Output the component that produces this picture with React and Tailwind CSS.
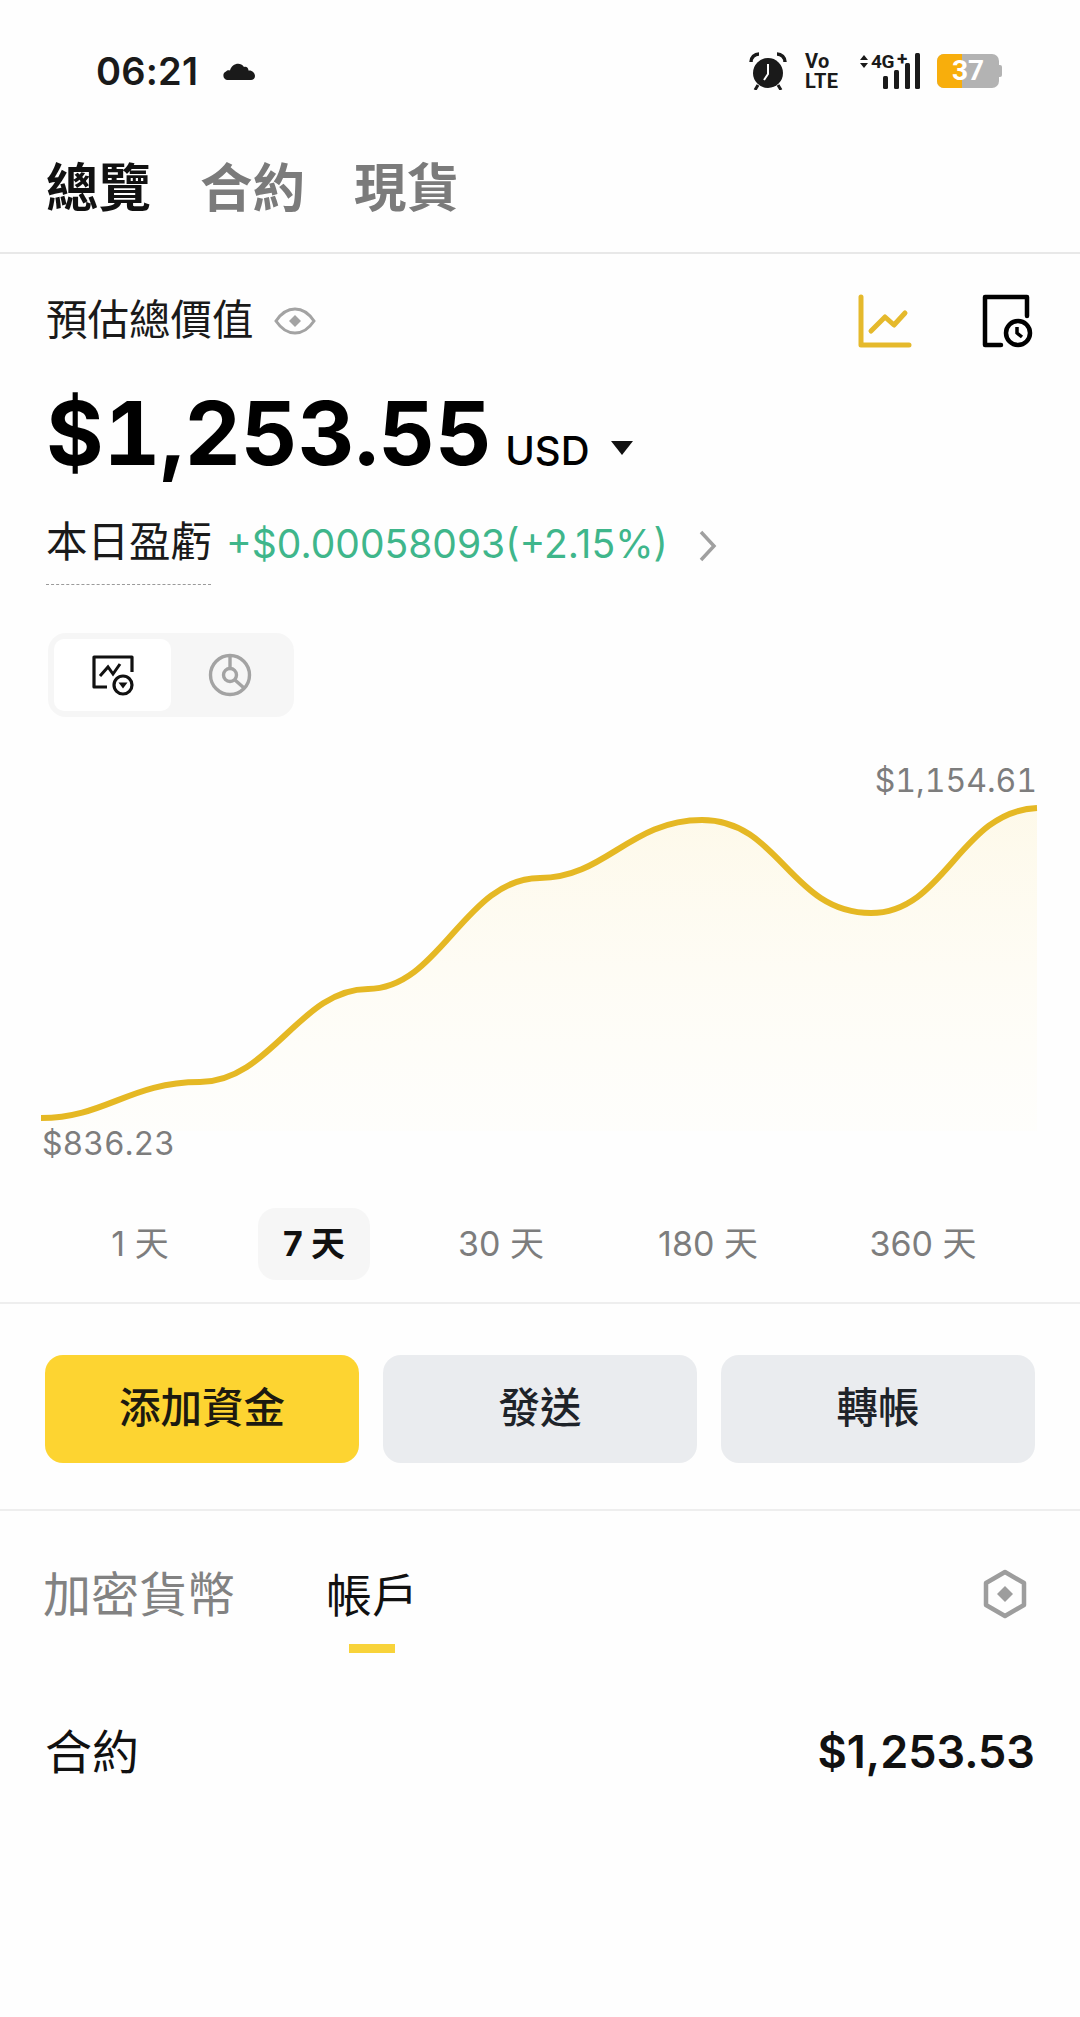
const lineD = "M41 317 C105 317 130 281 200 281 C270 281 300 188 368 188 C440 188 465 77 540 77 C605 77 630 19 702 19 C780 19 790 112 871 112 C945 112 960 10 1037 7";
const cjk = "font-['Inter','Noto_Sans_CJK_TC',sans-serif]";

function Chart() {
  return (
    <svg width="1080" height="330" viewBox="0 0 1080 330" className="block">
      <defs>
        <linearGradient id="fill" x1="0" y1="0" x2="0" y2="1">
          <stop offset="0" stopColor="#fdf6dc" stopOpacity="0.6" />
          <stop offset="1" stopColor="#fffdf5" stopOpacity="0.3" />
        </linearGradient>
      </defs>
      <path d={`${lineD} L1037 330 L41 330 Z`} fill="url(#fill)" />
      <path d={lineD} fill="none" stroke="#e5b824" strokeWidth="6" />
    </svg>
  );
}

function Status() {
  return (
    <div className="flex items-center h-[70px] mt-[36px] pl-[96px]">
      <span className="text-[38px] leading-none font-semibold text-[#1a1a1a] tracking-[0.2px] w-[126px]">06:21</span>
      <svg width="34" height="20" viewBox="0 0 34 20">
        <path d="M5 19 A4.5 4.5 0 0 1 4 10.5 C5 9 7 9 8 9.5 C9.5 3 18 0 22 6 C24 5 26.5 6.5 26.5 9.5 C30 9 33 12 33 15 C33 17.5 31 19 29 19 Z" fill="#1a1a1a" />
      </svg>
      <div className="flex-1" />
      <svg width="38" height="38" viewBox="0 0 38 38" className="mr-[18px]">
        <circle cx="19" cy="21" r="15" fill="#1a1a1a" />
        <path d="M2 10 A8 8 0 0 1 10 2" fill="none" stroke="#1a1a1a" strokeWidth="3.5" />
        <path d="M28 2 A8 8 0 0 1 36 10" fill="none" stroke="#1a1a1a" strokeWidth="3.5" />
        <path d="M9 33 L6 38 M29 33 L32 38" stroke="#1a1a1a" strokeWidth="3" />
        <path d="M19 12 L19 22 L15 28" fill="none" stroke="#fff" strokeWidth="2" />
      </svg>
      <div className="flex flex-col w-[34px] font-['Roboto',sans-serif] font-bold text-[#1a1a1a] text-[20px] leading-[20px] tracking-[0.4px] mr-[20px]">
        <span>Vo</span>
        <span>LTE</span>
      </div>
      <div className="relative w-[62px] h-[38px] mr-[16px]">
        <svg width="62" height="38" viewBox="0 0 62 38" className="absolute left-0 top-0">
          <path d="M1 8 L5 3 L9 8 Z M1 11 L9 11 L5 16 Z" fill="#1a1a1a" />
          <rect x="24" y="24" width="5" height="13" rx="1.5" fill="#1a1a1a" />
          <rect x="35" y="18" width="5" height="19" rx="1.5" fill="#1a1a1a" />
          <rect x="46" y="11" width="5" height="26" rx="1.5" fill="#1a1a1a" />
          <rect x="56" y="1" width="5" height="36" rx="1.5" fill="#1a1a1a" />
        </svg>
        <span className="absolute left-[12px] top-[0px] text-[19px] leading-[19px] font-['Roboto',sans-serif] font-bold text-[#1a1a1a] tracking-[-0.5px]">4G</span>
        <span className="absolute left-[38px] top-[-3px] text-[19px] leading-[19px] font-['Roboto',sans-serif] font-bold text-[#1a1a1a]">+</span>
      </div>
      <div className="relative w-[66px] h-[34px] mr-[77px] flex items-center">
        <div className="relative w-[62px] h-[34px] rounded-[7px] overflow-hidden bg-[#b3b3b3] flex items-center justify-center">
          <div className="absolute left-0 top-0 bottom-0 w-[25px] bg-[#f8ae0c]" />
          <span className="relative text-[28px] leading-none font-bold text-white font-['Roboto',sans-serif]">37</span>
        </div>
        <div className="w-[3px] h-[12px] bg-[#b3b3b3] rounded-r-[2px]" />
      </div>
    </div>
  );
}

function PageTabs() {
  return (
    <div className={`flex items-center h-[60px] mt-[52px] pl-[46px] text-[52.5px] leading-none font-bold ${cjk}`}>
      <span className="text-[#111] w-[154px]">總覽</span>
      <span className="text-[#7b7b7b] w-[154px]">合約</span>
      <span className="text-[#7b7b7b]">現貨</span>
    </div>
  );
}

function Header() {
  return (
    <div className="flex items-center h-[80px] mt-[27px] pl-[46px] pr-[46px]">
      <span className="text-[41.5px] leading-none text-[#1a1a1a]">預估總價值</span>
      <svg width="42" height="28" viewBox="0 0 42 28" className="ml-[20px]">
        <path d="M2 14 C8 5 14 2 21 2 C28 2 34 5 40 14 C34 23 28 26 21 26 C14 26 8 23 2 14 Z" fill="none" stroke="#a3a3a3" strokeWidth="3" />
        <path d="M21 8 L27 14 L21 20 L15 14 Z" fill="#a3a3a3" />
      </svg>
      <div className="flex-1" />
      <svg width="56" height="54" viewBox="0 0 56 54" className="mr-[68px]">
        <path d="M3 3 L3 51 L51 51" fill="none" stroke="#e5b92c" strokeWidth="5" strokeLinecap="round" strokeLinejoin="round" />
        <path d="M13 37 L27 23 L36 31 L47 19" fill="none" stroke="#e5b92c" strokeWidth="5" strokeLinecap="round" strokeLinejoin="round" />
      </svg>
      <svg width="52" height="54" viewBox="0 0 52 54">
        <path d="M19 51 L3 51 L3 3 L45 3 L45 22" fill="none" stroke="#000" strokeWidth="4.5" strokeLinecap="round" strokeLinejoin="round" />
        <circle cx="36" cy="39" r="12" fill="#fff" stroke="#000" strokeWidth="4.5" />
        <path d="M35 33 L35 39 L40 43" fill="none" stroke="#000" strokeWidth="3.5" />
      </svg>
    </div>
  );
}

function Amount() {
  return (
    <div className="flex items-baseline h-[100px] mt-[22px] pl-[46px] text-black">
      <span className="text-[88px] leading-[100px] font-bold tabular-nums">$1,253.55</span>
      <span className="ml-[13px] text-[40px] leading-none font-medium">USD</span>
      <svg width="24" height="16" viewBox="0 0 24 16" className="ml-[20px] translate-y-[-9px]">
        <path d="M1 1 L23 1 L12 15 Z" fill="#111" />
      </svg>
    </div>
  );
}

function Pnl() {
  return (
    <div className="mt-[35px] pl-[46px]">
      <div className="flex items-center h-[50px]">
        <span className="text-[41.5px] leading-none text-[#1a1a1a] w-[180px]">本日盈虧</span>
        <span className="text-[39px] leading-none text-[#3fb68b]">+$0.00058093(+2.15%)</span>
        <svg width="20" height="34" viewBox="0 0 20 34" className="ml-[30px] mt-[6px]">
          <path d="M3 3 L16 17 L3 31" fill="none" stroke="#a0a0a0" strokeWidth="3.5" />
        </svg>
      </div>
      <div className="w-[165px] mt-[16px] border-t border-dashed border-[#9a9a9a]" />
    </div>
  );
}

function Toggle() {
  return (
    <div className="ml-[48px] mt-[48px] w-[246px] h-[84px] rounded-[18px] bg-[#f6f6f6] p-[6px] flex">
      <div className="w-[117px] h-[72px] bg-white rounded-[10px] flex items-center justify-center">
        <svg width="44" height="42" viewBox="0 0 44 42">
          <path d="M16 33 L3 33 L3 3 L41 3 L41 18" fill="none" stroke="#111" strokeWidth="3.2" strokeLinejoin="round" />
          <path d="M9 22 L17 13 L22 20 L29 10" fill="none" stroke="#111" strokeWidth="3" />
          <circle cx="32" cy="31" r="9" fill="#fff" stroke="#111" strokeWidth="3.2" />
          <path d="M27.5 28.5 L36.5 28.5 L32 34.5 Z" fill="#111" />
        </svg>
      </div>
      <div className="flex-1 flex items-center justify-center">
        <svg width="44" height="44" viewBox="0 0 44 44">
          <circle cx="22" cy="22" r="19.5" fill="none" stroke="#a3a3a3" strokeWidth="3.4" />
          <circle cx="22" cy="22" r="6.5" fill="none" stroke="#a3a3a3" strokeWidth="3.4" />
          <path d="M22 3 L22 15 M27 27 L36 35" stroke="#a3a3a3" strokeWidth="3.4" />
        </svg>
      </div>
    </div>
  );
}

function Ranges() {
  const cls = "flex items-center justify-center h-[72px] text-[34px] leading-none text-[#7d7d7d]";
  return (
    <div className="flex items-center mt-[46px] pl-[92px]">
      <span className={`${cls} w-[96px]`}>1 天</span>
      <span className={`${cls} w-[112px] ml-[70px] rounded-[18px] bg-[#f6f6f6] !text-[#111] font-bold`}>7 天</span>
      <span className={`${cls} w-[100px] ml-[81px]`}>30 天</span>
      <span className={`${cls} w-[120px] ml-[97px]`}>180 天</span>
      <span className={`${cls} w-[120px] ml-[95px]`}>360 天</span>
    </div>
  );
}

function Actions() {
  const b = "w-[314px] h-[108px] rounded-[18px] flex items-center justify-center text-[41.5px] leading-none font-medium";
  return (
    <div className="flex gap-[24px] pl-[45px] pt-[51px] pb-[46px]">
      <button className={`${b} bg-[#fdd431] text-[#1c1a10]`}>添加資金</button>
      <button className={`${b} bg-[#eaecef] text-[#1e2329]`}>發送</button>
      <button className={`${b} bg-[#eaecef] text-[#1e2329]`}>轉帳</button>
    </div>
  );
}

function Tabs() {
  return (
    <div className="flex items-start mt-[54px] pl-[43px] pr-[53px] h-[88px]">
      <span className="text-[48px] leading-[60px] text-[#828282] w-[284px] whitespace-nowrap">加密貨幣</span>
      <div className="flex flex-col items-center w-[90px]">
        <span className="text-[46px] leading-[60px] text-[#111] whitespace-nowrap">帳戶</span>
        <div className="w-[46px] h-[9px] bg-[#f8d33a] mt-[19px]" />
      </div>
      <div className="flex-1" />
      <svg width="44" height="50" viewBox="0 0 44 50" className="mt-[4px]">
        <path d="M22 3 L41 14 L41 36 L22 47 L3 36 L3 14 Z" fill="none" stroke="#9d9d9d" strokeWidth="4.5" strokeLinejoin="round" />
        <path d="M22 17 L30 25 L22 33 L14 25 Z" fill="#9d9d9d" />
      </svg>
    </div>
  );
}

export default function App() {
  return (
    <div className={`w-[1080px] h-[2017px] bg-[#fefefe] overflow-hidden ${cjk}`}>
      <Status />
      <PageTabs />
      <div className="h-[2px] bg-[#e8e8e8] mt-[34px]" />
      <Header />
      <Amount />
      <Pnl />
      <Toggle />
      <div className="text-right pr-[43px] mt-[46px] h-[38px] text-[32px] leading-[36px] tabular-nums text-[#7d7d7d]">$1,154.61</div>
      <Chart />
      <div className="pl-[42px] mt-[-5px] h-[36px] text-[32px] leading-[36px] tabular-nums text-[#7d7d7d]">$836.23</div>
      <Ranges />
      <div className="h-[2px] bg-[#eeeeee] mt-[22px]" />
      <Actions />
      <div className="h-[2px] bg-[#eeeeee]" />
      <Tabs />
      <div className="flex items-center justify-between mt-[68px] pl-[45px] pr-[45px] h-[60px]">
        <span className="text-[47px] leading-none text-[#111]">合約</span>
        <span className="text-[45px] leading-none font-semibold text-[#111]">$1,253.53</span>
      </div>
    </div>
  );
}
